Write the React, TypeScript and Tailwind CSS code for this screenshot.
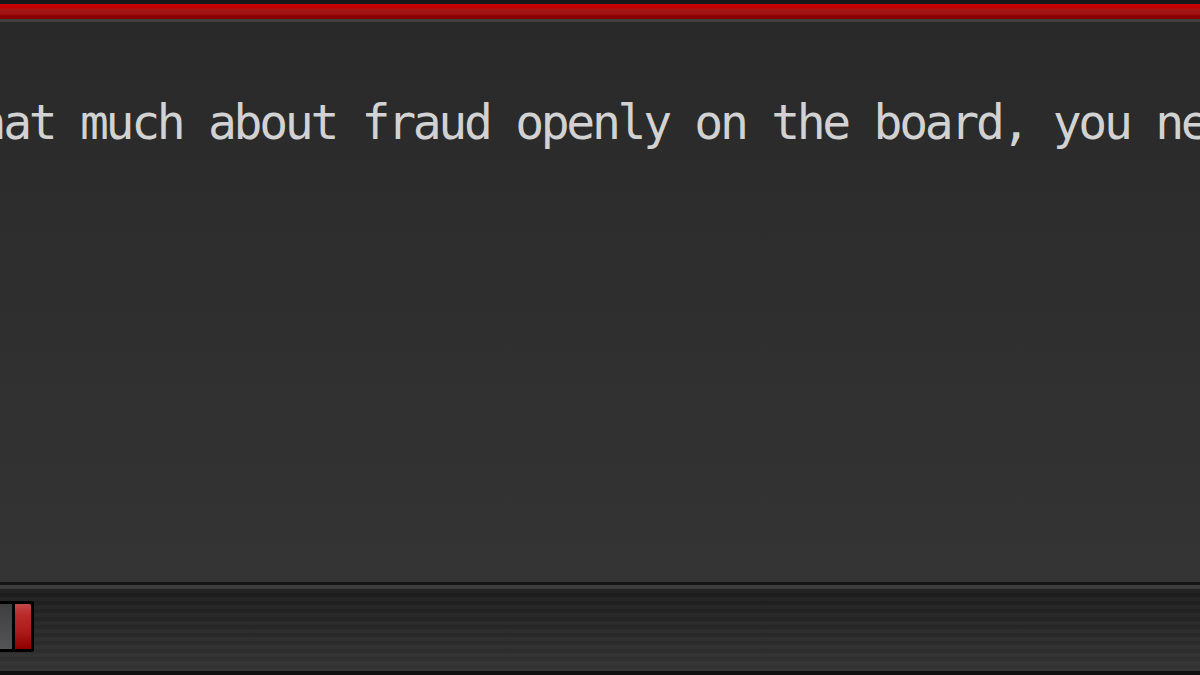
const TickerBoard = () => {
  return (
    <div className="h-[675px] w-full flex flex-col overflow-hidden bg-[#161616]">
      {/* top rail */}
      <div className="flex flex-col shrink-0">
        <div className="h-[4px] bg-[#181818]" />
        <div className="h-[15px] bg-[linear-gradient(to_bottom,#c80000_0%,#c20000_26%,#a81616_34%,#a01212_66%,#8a0000_80%,#860000_100%)]" />
        <div className="h-[3px] bg-[#404040]" />
      </div>

      {/* message area */}
      <main className="flex-1 overflow-hidden pt-[76px] bg-[linear-gradient(to_bottom,#292929,#343434)]">
        <p className="-ml-[48px] whitespace-nowrap text-[48px] leading-[48px] tracking-[-3.3px] text-[#d2d2d2] font-['DejaVu_Sans_Mono',monospace]">
          that much about fraud openly on the board, you need to
        </p>
      </main>

      {/* bottom track */}
      <div className="h-[93px] shrink-0 flex flex-col">
        <div className="h-[3px] bg-[#151515]" />
        <div className="h-[4px] bg-[#3c3c3c]" />
        <div className="flex-1 pt-[12px] bg-[repeating-linear-gradient(to_bottom,rgba(255,255,255,0.025)_0px,rgba(255,255,255,0.025)_4px,transparent_4px,transparent_8px),linear-gradient(to_bottom,#1c1c1c,#333333)]">
          <div className="flex h-[51px] w-[34px] border-y-[3px] border-r-[3px] border-black rounded-tr-[3px] rounded-br-[3px]">
            <div className="w-[12px] bg-[linear-gradient(to_bottom,#3e3e3e,#555555)]" />
            <div className="w-[3px] bg-black" />
            <div className="flex-1 rounded-tr-[2px] bg-[linear-gradient(to_bottom,#c24848_0%,#b82a2a_25%,#ac1c1c_60%,#8c0000_100%)]" />
          </div>
        </div>
        <div className="h-[4px] bg-[#111111]" />
      </div>
    </div>
  );
};

export default function App() {
  return <TickerBoard />;
}
